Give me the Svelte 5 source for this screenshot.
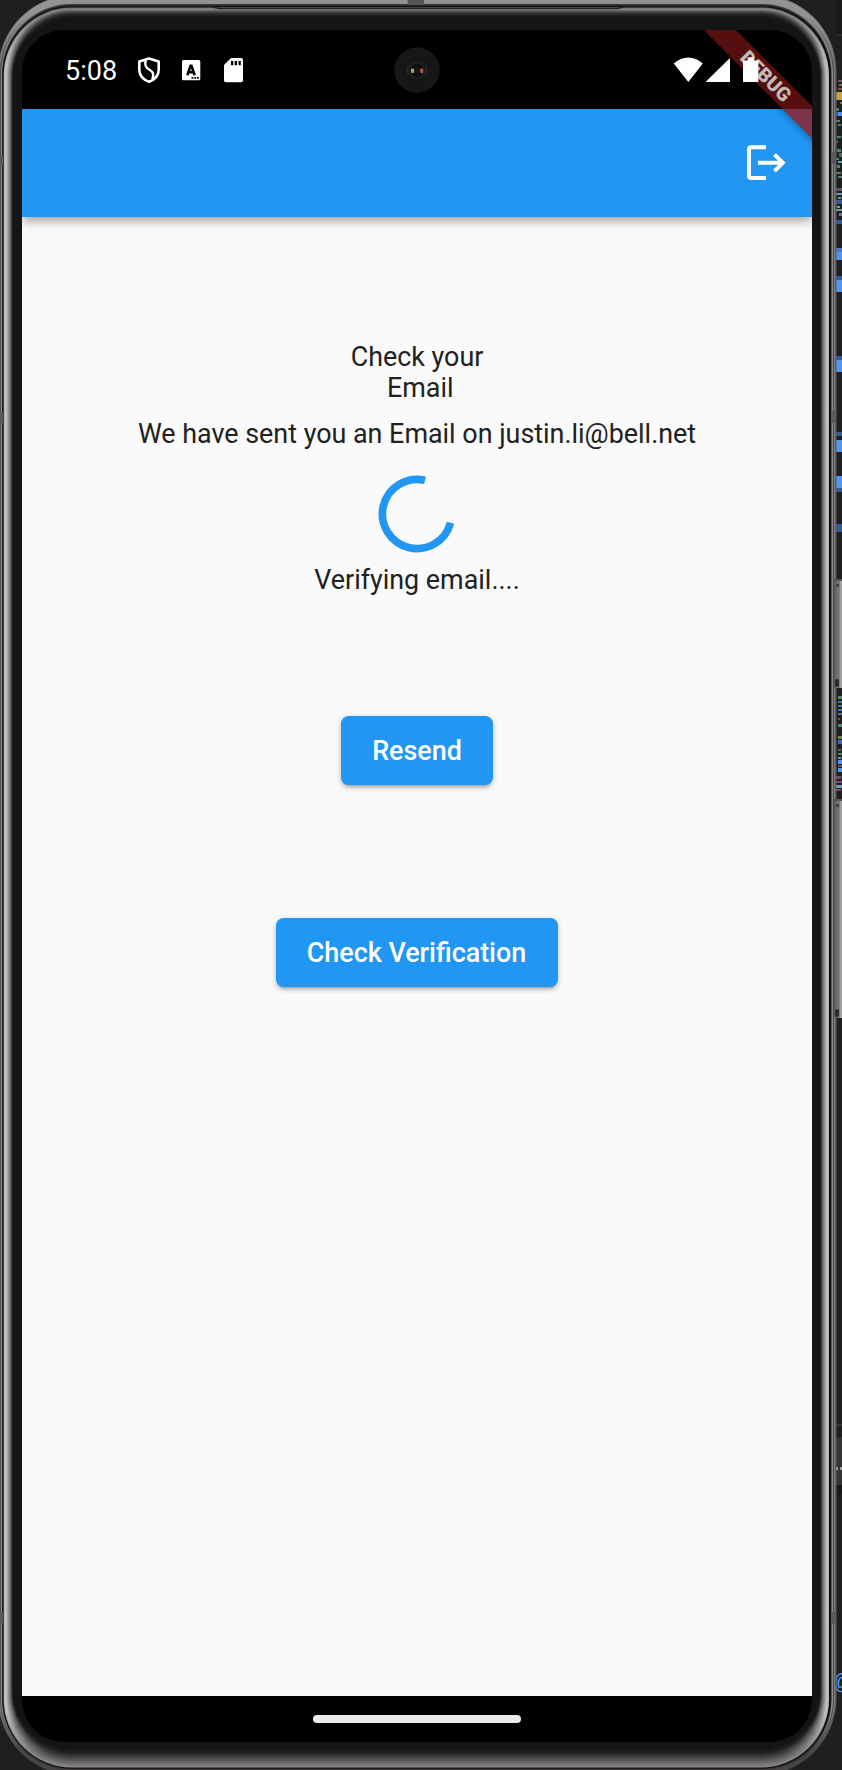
<script>
  // Metal rim drawn as concentric rounded rings: left, top, right, bottom, radius, side colour, top colour, bottom colour
  const rings = [
    [-2, -5, 836.5, 1775, 77, '#606060', '#8e8e8e', '#4a4545'],
    [-1, -3, 835, 1773, 75, '#7c7c7c', '#969696', '#4a4545'],
    [0, -1, 834, 1771, 73, '#4b4b4b', '#929292', '#464141'],
    [1, 3, 833, 1770, 71, '#8a8a8a', '#8c8c8c', '#3c3838'],
    [2, 4, 831.5, 1769, 70, '#202020', '#3b3b3b', '#282626'],
    [3, 5.5, 830.5, 1768.5, 69, '#0d0d0d', '#141414', '#111111'],
    [3.7, 7.5, 829, 1767.5, 68, '#b4b4b4', '#747474', '#858585'],
    [5, 8.7, 828, 1766, 67, '#c4c4c4', '#888888', '#7c7c7c'],
    [6, 9.7, 827, 1764.5, 66, '#bababa', '#6c6c6c', '#727272'],
    [7, 10.8, 826, 1763, 65, '#a6a6a6', '#575757', '#666666'],
    [8, 11.8, 825, 1761, 64, '#929292', '#444444', '#575757'],
    [9, 12.8, 824, 1759, 63, '#7b7b7b', '#343434', '#474747'],
    [10, 13.8, 823, 1757, 62, '#626262', '#282828', '#373737'],
    [11, 14.8, 822, 1755, 61, '#444444', '#202020', '#292929'],
    [12, 16, 821, 1753, 60, '#1d1d1d', '#191919', '#1d1d1d'],
    [13, 18, 820, 1750, 59, '#141414', '#151515', '#151515']
  ];
  // Slivers of the editor window behind the phone: x, y, width, height, colour
  const slivers = [
    [836, 0, 6, 34, '#191919'], [836, 34, 6, 2, '#2b2b2b'],
    [838, 80, 4, 2, '#73594c'], [839, 84, 3, 2, '#8b6a58'], [838, 88, 4, 2, '#73594c'],
    [836, 92, 6, 8, '#c8a53a'], [840, 102, 2, 2, '#8b6a58'],
    [836, 108, 3, 3, '#4c8a6d'], [838, 112, 4, 4, '#4b91f7'], [836, 112, 2, 4, '#345997'],
    [836, 120, 4, 2, '#5b7a78'], [838, 124, 3, 2, '#4c8a6d'], [837, 136, 4, 2, '#4c8a6d'],
    [836, 141, 2, 2, '#3d6ba8'], [837, 149, 4, 3, '#4c8a6d'], [839, 153, 3, 4, '#3f745b'],
    [836, 158, 3, 2, '#4c8a6d'], [838, 161, 4, 2, '#70a0a8'], [837, 165, 3, 3, '#4c8a6d'],
    [836, 172, 5, 2, '#577b86'], [838, 176, 4, 2, '#4c8a6d'], [836, 188, 6, 3, '#6d4f6c'],
    [836, 193, 6, 2, '#7899ac'], [838, 197, 3, 2, '#7899ac'], [836, 200, 6, 4, '#345997'],
    [837, 206, 3, 2, '#7899ac'], [836, 209, 6, 2, '#7899ac'], [839, 213, 3, 3, '#577b96'],
    [836, 220, 6, 4, '#345997'],
    [836, 248, 6, 4, '#427cd4'], [836, 252, 6, 8, '#4f96fa'],
    [836, 276, 6, 4, '#345997'], [836, 280, 6, 12, '#4f96fa'],
    [836, 356, 6, 4, '#345997'], [836, 360, 6, 12, '#4f96fa'],
    [836, 432, 6, 4, '#345997'], [836, 440, 6, 12, '#4f96fa'],
    [836, 476, 6, 12, '#4f96fa'], [836, 488, 6, 4, '#345997'], [836, 524, 6, 8, '#345997'],
    [838, 696, 4, 3, '#4c8a6d'], [838, 701, 4, 2, '#4b759c'], [838, 705, 4, 2, '#4b759c'],
    [838, 709, 4, 2, '#4b759c'], [838, 713, 4, 2, '#4b759c'], [838, 718, 2, 2, '#73506f'],
    [838, 724, 4, 3, '#4c8a6d'], [838, 736, 4, 3, '#71814d'], [838, 740, 4, 4, '#4665b7'],
    [838, 749, 3, 2, '#73506f'], [838, 753, 4, 2, '#4c8a6d'], [838, 757, 3, 2, '#7899ac'],
    [838, 760, 4, 4, '#4f96fa'], [838, 765, 4, 2, '#73506f'], [838, 768, 4, 4, '#4f96fa'],
    [836, 776, 5, 3, '#73506f'], [836, 781, 6, 2, '#73506f'], [836, 785, 6, 3, '#7899ac'],
    [836, 789, 5, 2, '#73506f'],
    [836, 1424, 6, 2, '#343434'], [836, 1437, 6, 48, '#333333'],
    [836, 1467, 2, 3, '#a0a0a0'], [840, 1467, 2, 3, '#a0a0a0'], [836, 1485, 6, 9, '#191919']
  ];
  const sideKeys = [[579, 109], [799, 219]];
</script>

<main>
  <svg class="shell" width="842" height="1770" viewBox="0 0 842 1770" aria-hidden="true">
    <defs>
      {#each rings as r, i}
        <linearGradient id="rim{i}" gradientUnits="userSpaceOnUse" x1="0" y1="0" x2="0" y2="1770">
          <stop offset="0.009" stop-color={r[6]} />
          <stop offset="0.036" stop-color={r[5]} />
          <stop offset="0.967" stop-color={r[5]} />
          <stop offset="0.991" stop-color={r[7]} />
        </linearGradient>
      {/each}
      <linearGradient id="key" x1="0" x2="1">
        <stop offset="0" stop-color="#5a5a5a" /><stop offset=".3" stop-color="#6c6c6c" />
        <stop offset=".65" stop-color="#777" /><stop offset=".78" stop-color="#999" /><stop offset="1" stop-color="#aaa" />
      </linearGradient>
    </defs>
    {#each slivers as [x, y, w, h, fill]}
      <rect {x} {y} width={w} height={h} {fill} />
    {/each}
    <text x="834.500" y="1689" class="at">@</text>
    {#each rings as r, i}
      <rect x={r[0]} y={r[1]} width={r[2] - r[0]} height={r[3] - r[1]} rx={r[4]} fill="url(#rim{i})" />
    {/each}
    {#each sideKeys as [y, h]}
      <rect x="834" {y} width="8" height={h} fill="url(#key)" />
      <rect x="834" {y} width="8" height="2" fill="#555" />
      <rect x="836" y={y + 5} width="3" height="3" fill="#444" />
      <rect x="835" y={y + h - 9} width="4" height="8" rx="2" fill="#2c2c2c" />
    {/each}
    <path d="M63 6.5H211l8 2.2H617l8-2.2H775" fill="none" stroke="#222" stroke-width="1.3" />
    <rect x="407.500" y="0" width="16.500" height="5" fill="#555" />
    <path d="M0 155h3v11H0zM831 152h5v12h-5zM831 411h5v12h-5zM0 413h3v11H0zM0 1612h3v11H0zM831 1612h5v12h-5z" fill="#5a5a5a" />
  </svg>

  <div class="screen">
    <header class="status">
      <span class="clock">5:08</span>
      <svg class="notices" width="108" height="30" viewBox="136 55 108 30" aria-hidden="true">
        <path d="M149 58.500l9.700 3.100v8.200c0 5.700-4.400 10-9.700 12-5.300-2-9.700-6.300-9.700-12v-8.200z" fill="none" stroke="#fff" stroke-width="2.600" stroke-linejoin="round" />
        <path d="M145.800 60.500c-1.500 4.500 0 7.500 4 9.500 3.500 1.800 4.500 4.500 2.500 9" fill="none" stroke="#fff" stroke-width="2.500" />
        <rect x="182" y="60" width="18.300" height="20.300" rx="1.500" fill="#fff" />
        <path d="M187.300 75.300l3.300-9.500h.8l3.300 9.500M188.500 72.200h5" fill="none" stroke="#000" stroke-width="2.600" />
        <path d="M191.500 77h1.800v1.800h-1.800zM194.300 77h1.800v1.800h-1.800zM197.100 77h1.800v1.800h-1.800z" />
        <path d="M231 58h10a2 2 0 0 1 2 2v20.300a2 2 0 0 1-2 2h-15a2 2 0 0 1-2-2V65z" fill="#fff" />
        <path d="M231 61h2.300v4.300H231zM234.700 61h2.300v4.300h-2.300zM238.500 61h2.300v4.300h-2.300z" />
      </svg>
      <svg class="radios" width="86" height="30" viewBox="673 55 86 30" aria-hidden="true">
        <path d="M673.800 63.500c8.500-8 20.500-8 29 0L688.300 82z" fill="#fff" />
        <path d="M705.500 82L730 58v24z" fill="#fff" />
        <path d="M743 60.500h4.700v-3.300h6v3.300h4.600V82H743z" fill="#fff" />
      </svg>
    </header>

    <div class="appbar">
      <svg width="46" height="46" viewBox="743 140 46 46" role="img" aria-label="Log out">
        <path d="M766 147.200h-15a2 2 0 0 0-2 2v26.800a2 2 0 0 0 2 2h15M758 162.800h24M774.500 154.500l8.300 8.300-8.300 8.300" fill="none" stroke="#fff" stroke-width="3.900" />
      </svg>
    </div>

    <div class="body">
      <p class="title">Check your<br /><span>Email</span></p>
      <p class="sent">We have sent you an Email on justin.li@bell.net</p>
      <svg class="spinner" width="78" height="78" viewBox="-39 -39 78 78" aria-hidden="true">
        <path d="M8-33.700A34.600 34.600 0 1 0 33.500 8.700" fill="none" stroke="#2196f3" stroke-width="7.700" />
      </svg>
      <p class="verifying">Verifying email....</p>
      <button class="resend">Resend</button>
      <button class="check">Check Verification</button>
    </div>

    <footer><span class="pill"></span></footer>

    <svg class="ribbon" width="130" height="140" viewBox="682 30 130 140" aria-hidden="true">
      <defs>
        <filter id="soft" x="-30%" y="-30%" width="160%" height="160%"><feGaussianBlur stdDeviation="5" /></filter>
        <clipPath id="low"><rect x="682" y="109" width="130" height="70" /></clipPath>
        <clipPath id="high"><rect x="682" y="30" width="130" height="79" /></clipPath>
      </defs>
      <path d="M694 20h32l106 106v32z" fill="#000" opacity=".5" filter="url(#soft)" clip-path="url(#low)" />
      <path d="M703.700 30H736l76 76v32.300z" fill="#560e0e" clip-path="url(#high)" />
      <path d="M703.700 30H736l76 76v32.300z" fill="#7d344a" clip-path="url(#low)" />
      <text transform="translate(766 76) rotate(45)" y="7" text-anchor="middle">DEBUG</text>
      <path d="M743 60.500h4.700v-3.300h6v3.300h4.600V82H743z" fill="#fff" />
    </svg>

    <svg class="camera" width="46" height="46" viewBox="-23 -23 46 46" aria-hidden="true">
      <circle r="22.800" fill="#171717" />
      <circle r="13" fill="#151515" />
      <circle r="9.500" fill="#1c1c1c" />
      <path d="M-8.500-5q-2.500 5 0 10M8.500-5q2.500 5 0 10" fill="none" stroke="#2c2c2c" stroke-width="1.500" />
      <circle r="6.500" fill="#0e0d0c" />
      <circle r="3.500" fill="#1c1813" />
      <rect x="-6" y="-1.500" width="3" height="4.500" rx="1" fill="#aaa568" />
      <rect x="3.200" y="-1.500" width="3" height="4.500" rx="1" fill="#b25b43" />
    </svg>
  </div>
</main>

<style>
  :global(body) { margin: 0; background: #1f1f1f; }
  main {
    position: relative;
    box-sizing: border-box;
    width: 842px;
    height: 1770px;
    padding: 30px 30px 28px 22px;
    overflow: hidden;
    background: #1f1f1f;
    font-family: Roboto, sans-serif;
  }
  .shell { position: absolute; inset: 0; }
  .at { font: bold 22px "Liberation Mono", monospace; fill: #4b91f7; }
  .screen {
    position: relative;
    display: flex;
    flex-direction: column;
    width: 790px;
    height: 1712px;
    overflow: hidden;
    border-radius: 42px;
    background: #000;
  }
  .status { display: flex; align-items: center; box-sizing: border-box; height: 79px; padding: 1px 53px 0 43px; }
  .clock { width: 71px; padding-top: 2px; color: #fff; font-size: 27px; line-height: 32px; }
  .notices { margin-top: -1px; }
  .radios { margin: -1px 0 0 auto; }
  .appbar {
    position: relative;
    display: flex;
    align-items: center;
    justify-content: flex-end;
    box-sizing: border-box;
    height: 107.500px;
    padding-right: 23px;
    background: #2196f3;
    box-shadow: 0 4px 8px -2px rgba(0, 0, 0, .22), 0 7px 9px rgba(0, 0, 0, .1), 0 2px 14px rgba(0, 0, 0, .1);
  }
  .body {
    display: flex;
    flex: 1;
    flex-direction: column;
    align-items: center;
    padding-top: 125.500px;
    background: #fafafa;
    color: #212121;
    font-size: 26.880px;
    line-height: 31px;
  }
  p { margin: 0; text-align: center; white-space: nowrap; }
  .title span { margin-left: 6.500px; }
  .sent { margin-top: 15px; }
  .spinner { margin-top: 25px; }
  .verifying { margin-top: 12px; }
  button {
    box-sizing: border-box;
    height: 69px;
    padding: 2px 0 0;
    border: 0;
    border-radius: 7.700px;
    background: #2196f3;
    box-shadow: 0 4px 3px -3px rgba(0, 0, 0, .2), 0 3px 4px rgba(0, 0, 0, .16), 0 1px 7px rgba(0, 0, 0, .12);
    color: #fff;
    font: 500 26.880px/67px Roboto, sans-serif;
  }
  .resend { width: 152px; margin-top: 120px; }
  .check { width: 282px; margin-top: 132.500px; padding-right: 1px; }
  footer { display: flex; align-items: center; justify-content: center; height: 46px; }
  .pill { width: 208px; height: 8px; border-radius: 4px; background: #ebebeb; }
  .ribbon { position: absolute; top: 0; right: 0; }
  .ribbon text { fill: #c0bcbc; font: 900 19.600px Roboto, sans-serif; }
  .camera { position: absolute; top: 17px; left: 372px; }
</style>
